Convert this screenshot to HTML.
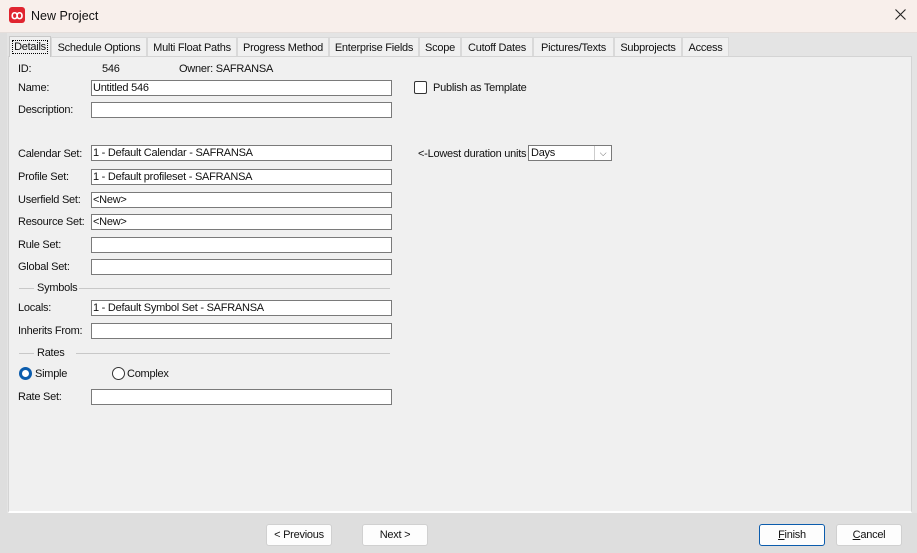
<!DOCTYPE html><html><head><style>
body{margin:0;width:917px;height:553px;overflow:hidden;background:#dedede;font-family:"Liberation Sans",sans-serif;font-size:11px;letter-spacing:-0.25px;color:#111;position:relative}
.a{position:absolute;white-space:nowrap}
.title{left:0;top:0;width:917px;height:32px;background:#f8efeb;border-bottom:1px solid #e5dedb}
.in{position:absolute;left:91px;width:301px;height:16px;background:#fff;border:1px solid #7a7a7a;line-height:14px;padding-left:1px;box-sizing:border-box}
.lab{position:absolute;left:18px}
.tab{position:absolute;top:37px;height:19px;background:#f0f0f0;border:1px solid #d9d9d9;border-bottom:none;line-height:20px;text-align:center;box-sizing:border-box}
.btn{position:absolute;top:524px;height:22px;background:#fdfdfd;border:1px solid #d0d0d0;border-radius:3px;text-align:center;line-height:21px;box-sizing:border-box}
.line{position:absolute;height:1px;background:#c8c8c8}
</style></head><body>
<div class="a title"></div>
<div class="a" style="left:9px;top:7px;width:16px;height:16px;background:#e0242f;border-radius:3px;color:#fff;font-size:12px;line-height:16px;text-align:center;font-weight:bold">ꝏ</div>
<div class="a" style="left:31px;top:9px;font-size:12.5px;letter-spacing:0">New Project</div>
<svg class="a" style="left:895px;top:9px" width="11" height="11"><path d="M0.5 0.5L10.5 10.5M10.5 0.5L0.5 10.5" stroke="#222" stroke-width="1.1"/></svg>
<div class="a" style="left:7px;top:33px;width:910px;height:480px;background:#e4e4e4"></div>
<div class="a" style="left:8px;top:56px;width:902px;height:454px;background:#f0f0f0;border:1px solid #d4d4d4;border-bottom:2px solid #fff"></div>
<div class="tab" style="left:9px;top:36px;height:21px;width:42px;background:#f0f0f0;border-color:#c8c8c8;line-height:21px"><span style="outline:1px dotted #000;padding:0 1px">Details</span></div>
<div class="tab" style="left:51px;width:96px">Schedule Options</div>
<div class="tab" style="left:147px;width:90px">Multi Float Paths</div>
<div class="tab" style="left:237px;width:92px">Progress Method</div>
<div class="tab" style="left:329px;width:90px">Enterprise Fields</div>
<div class="tab" style="left:419px;width:42px">Scope</div>
<div class="tab" style="left:461px;width:72px">Cutoff Dates</div>
<div class="tab" style="left:533px;width:81px">Pictures/Texts</div>
<div class="tab" style="left:614px;width:68px">Subprojects</div>
<div class="tab" style="left:682px;width:47px">Access</div>
<div class="lab" style="top:63px">ID:</div>
<div class="a" style="left:102px;top:63px">546</div>
<div class="a" style="left:179px;top:63px">Owner: SAFRANSA</div>
<div class="lab" style="top:82px">Name:</div><div class="in" style="top:80px">Untitled 546</div>
<div class="lab" style="top:104px">Description:</div><div class="in" style="top:102px"></div>
<div class="a" style="left:414px;top:81px;width:11px;height:11px;border:1px solid #333;border-radius:2px;background:#fff"></div>
<div class="a" style="left:433px;top:82px">Publish as Template</div>
<div class="lab" style="top:148px">Calendar Set:</div><div class="in" style="top:145px">1 - Default Calendar - SAFRANSA</div>
<div class="a" style="left:418px;top:148px">&lt;-Lowest duration units</div>
<div class="a" style="left:528px;top:145px;width:84px;height:16px;background:#fff;border:1px solid #7a7a7a;line-height:14px;padding-left:2px;box-sizing:border-box">Days<span style="position:absolute;right:0;top:0;width:16px;height:14px;border-left:1px solid #ccc;text-align:center;font-size:9px;color:#555">⌵</span></div>
<div class="lab" style="top:171px">Profile Set:</div><div class="in" style="top:169px">1 - Default profileset - SAFRANSA</div>
<div class="lab" style="top:194px">Userfield Set:</div><div class="in" style="top:192px">&lt;New&gt;</div>
<div class="lab" style="top:216px">Resource Set:</div><div class="in" style="top:214px">&lt;New&gt;</div>
<div class="lab" style="top:239px">Rule Set:</div><div class="in" style="top:237px"></div>
<div class="lab" style="top:261px">Global Set:</div><div class="in" style="top:259px"></div>
<div class="line" style="left:19px;top:288px;width:15px"></div>
<div class="a" style="left:37px;top:282px">Symbols</div>
<div class="line" style="left:79px;top:288px;width:311px"></div>
<div class="lab" style="top:302px">Locals:</div><div class="in" style="top:300px">1 - Default Symbol Set - SAFRANSA</div>
<div class="lab" style="top:325px">Inherits From:</div><div class="in" style="top:323px"></div>
<div class="line" style="left:19px;top:353px;width:15px"></div>
<div class="a" style="left:37px;top:347px">Rates</div>
<div class="line" style="left:76px;top:353px;width:314px"></div>
<div class="a" style="left:19px;top:367px;width:7px;height:7px;border:3px solid #0b5cad;border-radius:50%;background:#fff"></div>
<div class="a" style="left:35px;top:368px">Simple</div>
<div class="a" style="left:112px;top:367px;width:11px;height:11px;border:1px solid #333;border-radius:50%;background:#fff"></div>
<div class="a" style="left:127px;top:368px">Complex</div>
<div class="lab" style="top:391px">Rate Set:</div><div class="in" style="top:389px"></div>
<div class="btn" style="left:266px;width:66px">&lt; Previous</div>
<div class="btn" style="left:362px;width:66px">Next &gt;</div>
<div class="btn" style="left:759px;width:66px;border:1px solid #0b5cad"><u>F</u>inish</div>
<div class="btn" style="left:836px;width:66px"><u>C</u>ancel</div>
</body></html>
